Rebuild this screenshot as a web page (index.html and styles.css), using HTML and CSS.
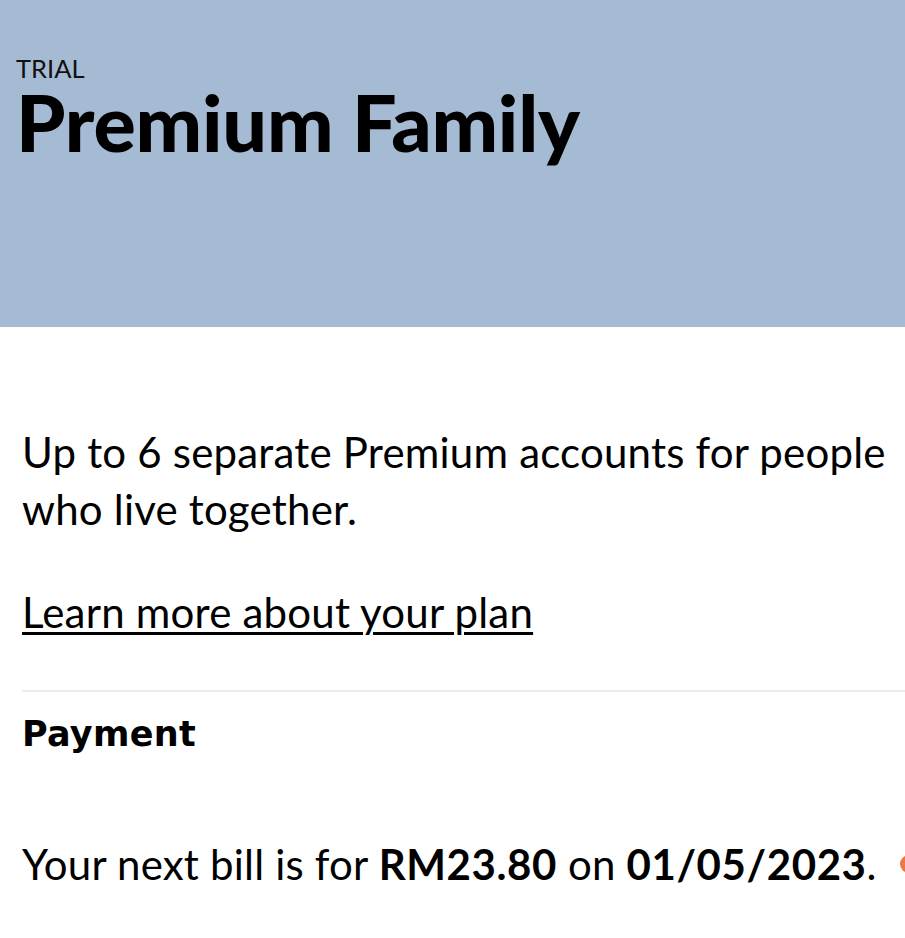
FILE: index.html
```html
<!DOCTYPE html>
<html lang="en">
<head>
<meta charset="utf-8">
<title>Premium Family</title>
<link rel="stylesheet" href="styles.css">
</head>
<body>
<header class="hero">
  <div class="hero-label">TRIAL</div>
  <h1 class="hero-title">Premium Family</h1>
</header>
<main class="content">
  <p class="desc">Up to 6 separate Premium accounts for people who live together.</p>
  <a class="learn" href="#">Learn more about your plan</a>
  <hr class="divider">
  <h2 class="section-title">Payment</h2>
  <div class="bill-row">
    <p class="bill">Your next bill is for <strong>RM23.80</strong> on <strong>01/05/2023</strong>.</p>
    <span class="dot"></span>
  </div>
</main>
</body>
</html>
```

FILE: styles.css
```css
html, body {
  margin: 0;
  padding: 0;
  background: #ffffff;
  overflow: hidden;
}
body {
  font-family: Lato, "Noto Sans", sans-serif;
  color: #000;
  width: 905px;
  height: 938px;
}
.hero {
  background: #a5bad3;
  height: 327px;
  box-sizing: border-box;
  padding: 54px 0 0 16px;
}
.hero-label {
  font-size: 25.5px;
  line-height: 28px;
  color: #111;
}
.hero-title {
  margin: 0;
  font-size: 79px;
  line-height: 80px;
  font-weight: 900;
  letter-spacing: -0.2px;
}
.content {
  padding: 97px 0 0 22px;
}
.desc {
  margin: 0;
  font-size: 42px;
  line-height: 57px;
  letter-spacing: 0.2px;
  width: 878px;
}
.learn {
  display: inline-block;
  margin-top: 50px;
  font-size: 42px;
  line-height: 48px;
  letter-spacing: 0.2px;
  color: #000;
  text-decoration: underline;
  text-decoration-thickness: 3px;
  text-underline-offset: 4px;
}
.divider {
  border: 0;
  border-top: 2px solid #ececec;
  margin: 54px 0 0 0;
}
.section-title {
  margin: 20px 0 0 0;
  font-family: "DejaVu Sans", Lato, sans-serif;
  font-size: 35px;
  line-height: 44px;
  font-weight: 700;
  letter-spacing: 0.3px;
}
.bill-row {
  display: flex;
  align-items: center;
  gap: 23px;
  margin-top: 84px;
}
.bill {
  margin: 0;
  font-size: 42px;
  line-height: 48px;
  letter-spacing: 0.2px;
  white-space: nowrap;
}
.bill strong {
  font-weight: 700;
  letter-spacing: 0.6px;
}
.dot {
  flex-shrink: 0;
  width: 18px;
  height: 18px;
  border-radius: 50%;
  background: #ec7a3e;
}
```
